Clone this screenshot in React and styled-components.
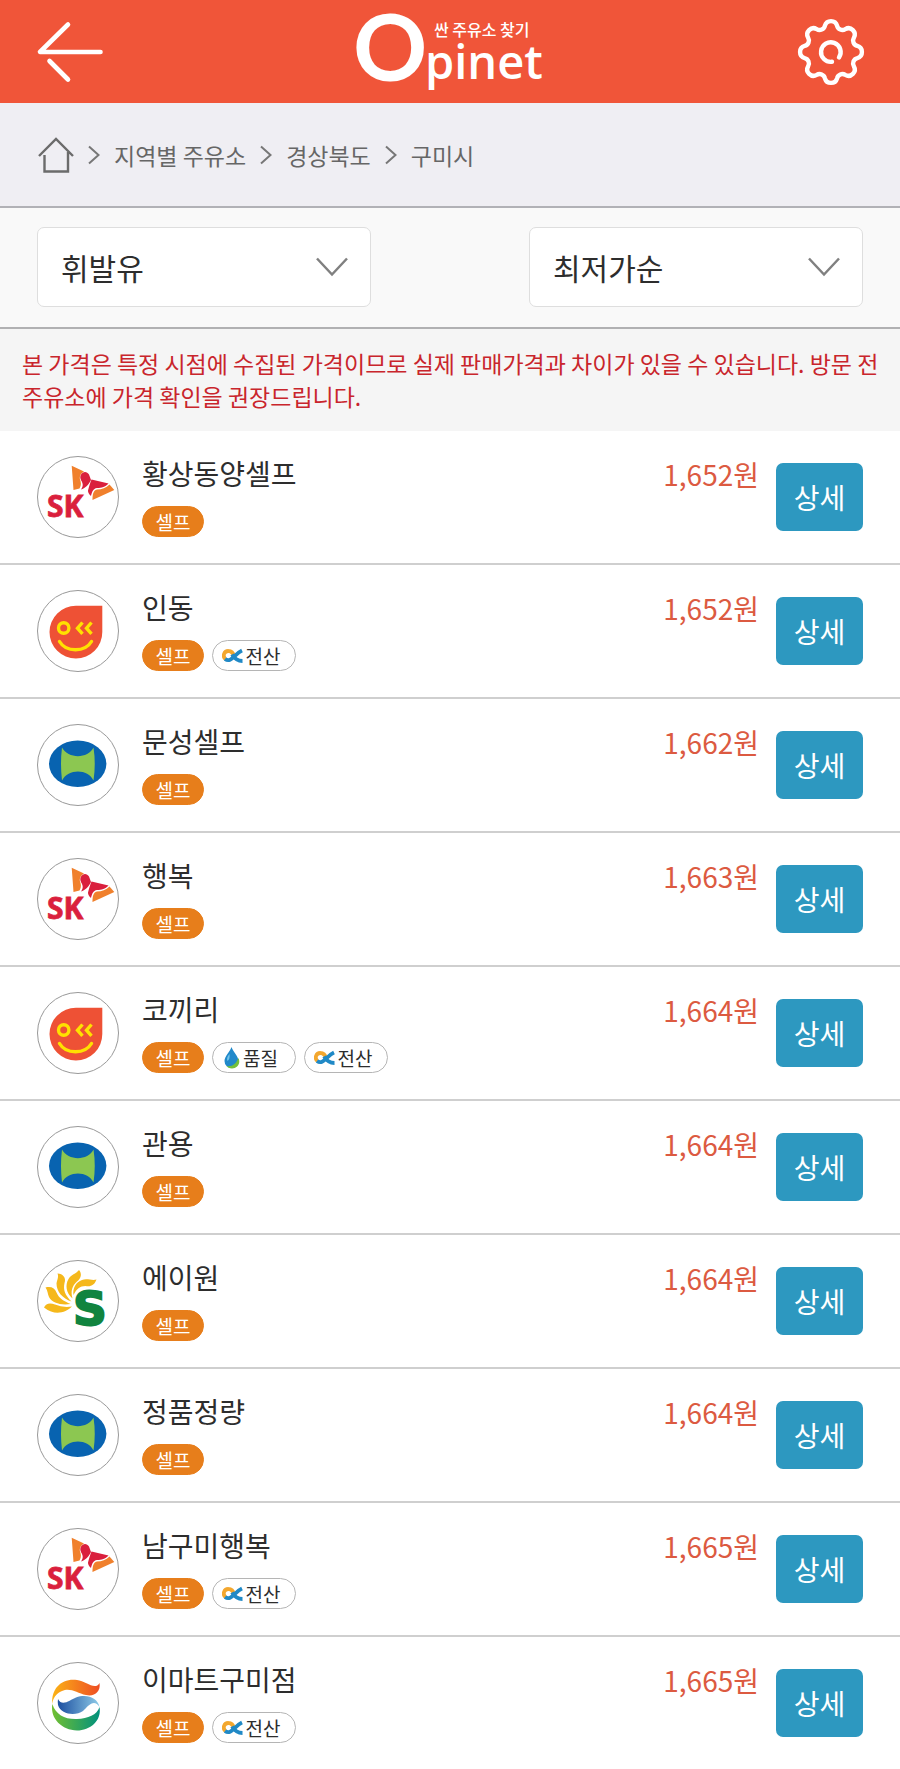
import { useState } from "react";
import styled, { createGlobalStyle } from "styled-components";

const GlobalStyle = createGlobalStyle`
  * {
    box-sizing: border-box;
  }
  body {
    margin: 0;
    background: #fff;
    color: #2d2d2d;
    font-family: "Noto Sans CJK KR", "Noto Sans", sans-serif;
  }
  button, select {
    font-family: inherit;
  }
`;

const Header = styled.header`
  display: flex;
  align-items: center;
  justify-content: space-between;
  height: 103px;
  padding: 0 36px;
  background: #f05539;
`;
const IconButton = styled.button`
  display: flex;
  padding: 0;
  border: 0;
  background: none;
  cursor: pointer;
`;
const LogoLink = styled.a`
  display: flex;
`;
const Breadcrumb = styled.nav`
  display: flex;
  align-items: center;
  gap: 14px;
  height: 105px;
  padding: 0 38px;
  border-bottom: 2px solid #b1b1b6;
  background: #efeef3;
`;
const Crumb = styled.a`
  display: flex;
  color: #666;
  font-size: 23px;
  line-height: 32px;
  text-decoration: none;
`;
const Filters = styled.div`
  display: flex;
  justify-content: space-between;
  gap: 40px;
  padding: 19px 37px 20px;
  border-bottom: 2px solid #b1b1b3;
  background: #f9f9f9;
`;
const SelectBox = styled.label`
  position: relative;
  width: 334px;
  svg {
    position: absolute;
    top: 30px;
    right: 23px;
    pointer-events: none;
  }
`;
const Select = styled.select`
  width: 100%;
  height: 80px;
  padding: 0 60px 0 23px;
  border: 1px solid #dedede;
  border-radius: 7px;
  appearance: none;
  background: #fff;
  color: #2d2d2d;
  font-size: 30px;
`;
const Notice = styled.p`
  margin: 0;
  padding: 18px 20px 18px 22px;
  background: #f5f5f5;
  color: #c9252c;
  font-size: 23px;
  line-height: 33px;
`;
const List = styled.ul`
  margin: 0;
  padding: 0;
  list-style: none;
`;
const Row = styled.li`
  display: flex;
  align-items: center;
  height: 134px;
  padding: 0 37px;
  border-bottom: 2px solid #cfcfcf;
  &:last-child {
    height: 132px;
    border-bottom: 0;
  }
`;
const Brand = styled.div`
  flex: none;
  width: 82px;
  height: 82px;
  border: 1px solid #999;
  border-radius: 50%;
  svg {
    display: block;
    width: 80px;
    height: 80px;
  }
`;
const Info = styled.div`
  flex: 1;
  align-self: flex-start;
  padding: 21px 0 0 23px;
`;
const Name = styled.h2`
  margin: 0 0 12px;
  font-size: 28px;
  font-weight: 400;
  line-height: 42px;
`;
const Badges = styled.div`
  display: flex;
  gap: 8px;
`;
const Badge = styled.span`
  display: flex;
  align-items: center;
  justify-content: center;
  gap: 3px;
  width: ${(props) => (props.$self ? "62px" : "84px")};
  height: 31px;
  padding-right: ${(props) => (props.$self ? "0" : "6px")};
  border: 1px solid ${(props) => (props.$self ? "#e77e1b" : "#b5b5b5")};
  border-radius: 16px;
  background: ${(props) => (props.$self ? "#e77e1b" : "#fff")};
  color: ${(props) => (props.$self ? "#fff" : "#2d2d2d")};
  font-size: 19px;
  line-height: 28px;
`;
const Price = styled.strong`
  align-self: flex-start;
  padding: 22px 17px 0 0;
  color: #dc5a41;
  font-size: 28px;
  font-weight: 400;
  line-height: 42px;
`;
const DetailButton = styled.button`
  width: 87px;
  height: 68px;
  padding: 0;
  border: 0;
  border-radius: 7px;
  background: #2d98c0;
  color: #fff;
  font-size: 28px;
  cursor: pointer;
`;

const gearPoint = (deg) => {
  const a = (deg * Math.PI) / 180;
  return `${(33 + 27 * Math.cos(a)).toFixed(2)} ${(33 + 27 * Math.sin(a)).toFixed(2)}`;
};
// eight teeth, each an outward arc followed by a shallow inward one
const gearPath =
  `M${gearPoint(-13)}` +
  [0, 45, 90, 135, 180, 225, 270, 315]
    .map((deg) => `A6.300 6.300 0 0 1 ${gearPoint(deg + 13)}A5.500 5.500 0 0 0 ${gearPoint(deg + 32)}`)
    .join("") +
  "Z";

const BackIcon = () => (
  <svg width="68" height="62" viewBox="0 0 68 62" fill="none" stroke="#fff" strokeWidth="4.6" strokeLinecap="round" strokeLinejoin="round">
    <path d="M32 3.500 4 31H64.500M13.500 40 32 58.500" />
  </svg>
);

const GearIcon = () => (
  <svg width="66" height="66" viewBox="0 0 66 66" fill="none" stroke="#fff" strokeWidth="4.400" strokeLinecap="round" strokeLinejoin="round" overflow="visible">
    <path d={gearPath} />
    <path d="M34 42.800A9.800 9.800 0 1 1 41 38.500" />
  </svg>
);

const Logo = () => (
  <svg width="190" height="84" viewBox="0 0 190 84" fill="#fff" overflow="visible">
    <text x="-3" y="71" fontFamily="Lato" fontSize="92" fontWeight="700">O</text>
    <text x="69" y="69" fontFamily="Open Sans" fontSize="47" fontWeight="600">pinet</text>
    <text x="78" y="26" fontFamily="Noto Sans CJK KR" fontSize="16" fontWeight="500">싼 주유소 찾기</text>
  </svg>
);

const HomeIcon = () => (
  <svg width="36" height="36" viewBox="0 0 36 36" fill="none" stroke="#6b6b6b" strokeWidth="2.400">
    <path d="M1 19 18 2 35 19M6.500 18V34.500H30V15" />
  </svg>
);

const Separator = () => (
  <svg width="12" height="20" viewBox="0 0 12 20" fill="none" stroke="#777" strokeWidth="2">
    <path d="M1 1.500 10.500 10 1 18.500" />
  </svg>
);

const ChevronDown = () => (
  <svg width="32" height="20" viewBox="0 0 32 20" fill="none" stroke="#808080" strokeWidth="2.500">
    <path d="M1 1.500 16 17.500 31 1.500" />
  </svg>
);

const SkLogo = () => (
  <svg viewBox="1 1 80 80">
    <path d="M34.700 9.700 47 15.500C43 18 42 21 43.500 25C44.500 28 43.500 31 42.500 32.500L36.500 34Z" fill="#f0802c" />
    <path d="M44 18.500C46 15 50 15 52 18.500L54 24C51.500 29 48 32.500 44 33.500C46.500 30 46 27.500 44.200 24.500C43 22 43 20 44 18.500Z" fill="#da1f3d" />
    <path d="M54.500 23.500 71.500 27.500C68 31 65 32 60 32C56 32.500 55 36 54 40C51.500 38 51 36 51 34.500C52 31 53 27 54.500 23.500Z" fill="#da1f3d" />
    <path d="M72.500 28.500 77.300 34 55.500 44C55.500 39 56 34.500 60 33.500C65 33.500 69 32 72.500 28.500Z" fill="#f0802c" />
    <text x="10" y="60.500" fontFamily="Open Sans" fontSize="30" fontWeight="700" fill="#da1f3d" stroke="#da1f3d" strokeWidth="0.800">SK</text>
  </svg>
);

const SkinLogo = () => (
  <svg viewBox="1 1 80 80">
    <path d="M65.300 15.700V42A26.400 26.400 0 1 1 39 15.700Z" fill="#ee5135" />
    <g fill="none" stroke="#ffe100" strokeWidth="3.400" strokeLinecap="round">
      <circle cx="26.700" cy="38" r="5.200" />
      <path d="M45.500 32.500 40.500 38.200 45.500 43.800M54.500 32.500 49.500 38.200 54.500 43.800" strokeLinecap="butt" />
      <path d="M22.500 51.500C29 62.500 48 62.500 54.500 51.500" />
    </g>
  </svg>
);

const HdLogo = () => (
  <svg viewBox="1 1 80 80">
    <ellipse cx="40.700" cy="39.800" rx="28.700" ry="23.200" fill="#0863b0" />
    <path d="M25 23.500C31 35 51 35 56.500 23.500Q59 39.500 56.500 56.500C51 44.500 31 44.500 25 56.500Q23 39.500 25 23.500Z" fill="#8cc751" />
  </svg>
);

const SoilLogo = () => (
  <svg viewBox="1 1 80 80">
    <g fill="#f5b81b">
      <path d="M7 47.500C9 43 13 42.500 18 44.500Q26 48 35 46.500C30 51.500 22 54.500 14 51.500Q10 50 7 47.500Z" />
      <path d="M8.500 27.500C14 26 18 28 19.500 32.500C22 38.500 27 41 33.500 44C24 45.500 15 43 12 37C10.500 34 11 31 8.500 27.500Z" />
      <path d="M20.500 13.500C26 13.500 29.500 18 27.500 23C26 30 28 35 34.500 41.500C25.500 38.500 19.500 31.500 19.500 23.500C20 20 22 17 20.500 13.500Z" />
      <path d="M42 10C45 13.500 44.500 18 40 21.500C35 26 33.500 31 35.500 38.500C29 33 28 25 31.500 19C34 14.500 39 14 42 10Z" />
      <path d="M59.500 19.500C57.500 25 54 27 48.500 26C43 26 39.500 29 36.500 35C35.500 28 39 22 45 20C50 18 55 21 59.500 19.500Z" />
    </g>
    <text x="36" y="65" fontFamily="DejaVu Sans" fontSize="47" fontWeight="700" fill="#11843f" stroke="#11843f" strokeWidth="2">S</text>
  </svg>
);

const GsLogo = () => (
  <svg viewBox="1 1 80 80">
    <defs>
      <linearGradient id="gsOrange">
        <stop offset="0" stopColor="#fbb316" />
        <stop offset="1" stopColor="#ee4d23" />
      </linearGradient>
      <linearGradient id="gsBlue">
        <stop offset="0" stopColor="#1c4fa0" />
        <stop offset="1" stopColor="#8ecbe8" />
      </linearGradient>
      <linearGradient id="gsGreen">
        <stop offset="0" stopColor="#72bf31" />
        <stop offset="1" stopColor="#00917c" />
      </linearGradient>
    </defs>
    <path d="M15.300 42C14 26 25 16 40 18C49 19 58 29 62.500 21C64 30 57 35 49 33C40 31 33 25 25 29C19 31.500 16 36 15.300 42Z" fill="url(#gsOrange)" />
    <path d="M21 37C25 45 33 38 39 35.500C50 31.500 61 36 62.500 45C57 36 51 44 46 49C39 54 24 53 21 43Q20.500 40 21 37Z" fill="url(#gsBlue)" />
    <path d="M15.300 42C19 53 28 57.500 40 57C51 56.500 60 53 62.500 45C65 59 53 68.500 40 68.500C25 68 13 57 15.300 42Z" fill="url(#gsGreen)" />
  </svg>
);

const DropIcon = () => (
  <svg width="16" height="22" viewBox="0 0 16 22">
    <path d="M7.500 0C9 5 14.500 9 14.500 14A7 7 0 0 1 .5 14C.5 9 6 5 7.500 0Z" fill="#2189ca" />
    <path d="M5.500 7C3 10 2.500 12 3.500 14C5 13 6 11 5.500 7Z" fill="#73c4ea" />
    <path d="M14.500 11C17 17 13 21.500 8 21.500C5.500 21.500 3.500 20.500 2.500 19C8 20 12 17 14.500 11Z" fill="#73bf3b" />
  </svg>
);

const AlphaIcon = () => (
  <svg width="21" height="16" viewBox="0 0 21 16" fill="none" strokeWidth="3.800">
    <path d="M12.500 9C11 4 9 3 6.500 3A4.500 4.500 0 0 0 3.500 11" stroke="#f3a72e" />
    <path d="M3 11C9 15.500 12.500 6 20 2.500M10 6.500C12.500 10.500 16 13 20.500 13" stroke="#2089c6" />
  </svg>
);

const logos = { sk: SkLogo, skin: SkinLogo, hd: HdLogo, soil: SoilLogo, gs: GsLogo };

const stations = [
  { id: 1, brand: "sk", name: "황상동양셀프", price: "1,652" },
  { id: 2, brand: "skin", name: "인동", price: "1,652", computed: true },
  { id: 3, brand: "hd", name: "문성셀프", price: "1,662" },
  { id: 4, brand: "sk", name: "행복", price: "1,663" },
  { id: 5, brand: "skin", name: "코끼리", price: "1,664", quality: true, computed: true },
  { id: 6, brand: "hd", name: "관용", price: "1,664" },
  { id: 7, brand: "soil", name: "에이원", price: "1,664" },
  { id: 8, brand: "hd", name: "정품정량", price: "1,664" },
  { id: 9, brand: "sk", name: "남구미행복", price: "1,665", computed: true },
  { id: 10, brand: "gs", name: "이마트구미점", price: "1,665", computed: true },
];

const Station = ({ station }) => {
  const BrandLogo = logos[station.brand];
  return (
    <Row>
      <Brand>
        <BrandLogo />
      </Brand>
      <Info>
        <Name>{station.name}</Name>
        <Badges>
          <Badge $self>셀프</Badge>
          {station.quality && (
            <Badge>
              <DropIcon />
              품질
            </Badge>
          )}
          {station.computed && (
            <Badge>
              <AlphaIcon />
              전산
            </Badge>
          )}
        </Badges>
      </Info>
      <Price>{station.price}원</Price>
      <DetailButton type="button">상세</DetailButton>
    </Row>
  );
};

export default function App() {
  const [fuel, setFuel] = useState("휘발유");
  const [sort, setSort] = useState("최저가순");

  return (
    <>
      <GlobalStyle />
      <Header>
        <IconButton type="button" aria-label="뒤로">
          <BackIcon />
        </IconButton>
        <LogoLink href="#" aria-label="Opinet">
          <Logo />
        </LogoLink>
        <IconButton type="button" aria-label="설정">
          <GearIcon />
        </IconButton>
      </Header>
      <Breadcrumb>
        <Crumb href="#" aria-label="홈">
          <HomeIcon />
        </Crumb>
        <Separator />
        <Crumb href="#">지역별 주유소</Crumb>
        <Separator />
        <Crumb href="#">경상북도</Crumb>
        <Separator />
        <Crumb href="#">구미시</Crumb>
      </Breadcrumb>
      <Filters>
        <SelectBox>
          <Select aria-label="유종" value={fuel} onChange={(e) => setFuel(e.target.value)}>
            <option>휘발유</option>
          </Select>
          <ChevronDown />
        </SelectBox>
        <SelectBox>
          <Select aria-label="정렬" value={sort} onChange={(e) => setSort(e.target.value)}>
            <option>최저가순</option>
          </Select>
          <ChevronDown />
        </SelectBox>
      </Filters>
      <Notice>
        본 가격은 특정 시점에 수집된 가격이므로 실제 판매가격과 차이가 있을 수 있습니다. 방문 전 주유소에 가격 확인을 권장드립니다.
      </Notice>
      <List>
        {stations.map((station) => (
          <Station key={station.id} station={station} />
        ))}
      </List>
    </>
  );
}
